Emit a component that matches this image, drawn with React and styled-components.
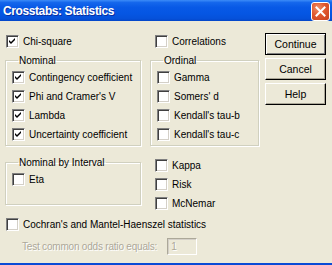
import React from "react";
import styled, { createGlobalStyle } from "styled-components";

const Global = createGlobalStyle`
  html, body { margin: 0; padding: 0; background: #ECE9D8; }
  body { font-family: "Liberation Sans", Arial, sans-serif; }
`;

const Window = styled.div`
  width: 332px;
  height: 265px;
  box-sizing: border-box;
  background: #ECE9D8;
  display: flex;
  flex-direction: column;
  overflow: hidden;
  border-bottom: 2px solid #0A4BD6;
  font-family: "Liberation Sans", Arial, sans-serif;
  font-size: 10px;
  color: #000;
`;

const TitleBar = styled.div`
  height: 21px;
  flex: none;
  display: flex;
  align-items: center;
  justify-content: space-between;
  padding: 0 2px 0 3px;
  background: linear-gradient(
    to bottom,
    #3C8CF8 0%,
    #1567EC 12%,
    #0859E6 35%,
    #0556E3 65%,
    #0551DA 88%,
    #0446C8 100%
  );
`;

const Title = styled.div`
  color: #fff;
  font-weight: bold;
  font-size: 12px;
  letter-spacing: -0.4px;
  text-shadow: 1px 1px 0 #0A2FA0;
`;

const CloseBtn = styled.div`
  width: 19px;
  height: 19px;
  box-sizing: border-box;
  border: 1px solid #fff;
  border-radius: 3px;
  background: radial-gradient(circle at 35% 30%, #F0906A 0%, #E0582E 45%, #C8401E 100%);
  display: flex;
  align-items: center;
  justify-content: center;
  margin-top: 1px;
`;

const Body = styled.div`
  flex: 1;
  display: flex;
  padding: 14px 0 0 5px;
`;

const Main = styled.div`
  width: 254px;
  display: grid;
  grid-template-columns: 145px 109px;
  grid-auto-rows: auto;
  align-content: start;
`;

const Cell = styled.div`
  grid-column: ${(p) => (p.$span ? "1 / -1" : "auto")};
  margin-top: ${(p) => p.$mt || 0}px;
  display: flex;
  flex-direction: column;
  gap: ${(p) => p.$gap || 0}px;
  padding-left: ${(p) => p.$pl || 0}px;
`;

const Group = styled.fieldset`
  margin: 0;
  padding: 4px 0 0 6px;
  height: ${(p) => p.$h}px;
  width: ${(p) => p.$w}px;
  box-sizing: border-box;
  border: 1px solid #D0D0BF;
  box-shadow: inset 1px 1px 0 #fff, 1px 1px 0 #fff;
  display: flex;
  flex-direction: column;
  gap: 6px;
`;

const Legend = styled.legend`
  padding: 0 1px;
  margin-left: 6px;
  line-height: 13px;
  font-size: 10px;
`;

const CheckRow = styled.label`
  display: flex;
  align-items: center;
  height: 13px;
  white-space: nowrap;
  color: #000;
`;

const Box = styled.span`
  width: 13px;
  height: 13px;
  box-sizing: border-box;
  flex: none;
  background: #fff;
  border-top: 1px solid #808080;
  border-left: 1px solid #808080;
  border-right: 1px solid #fff;
  border-bottom: 1px solid #fff;
  box-shadow: inset 1px 1px 0 #404040, inset -1px -1px 0 #D4D0C8;
  display: flex;
  align-items: center;
  justify-content: center;
  margin-right: 4px;
`;

const Check = ({ checked, label }) => (
  <CheckRow>
    <Box>
      {checked && (
        <svg width="7" height="7" viewBox="0 0 7 7">
          <path d="M0 2 L2 4 L6 0 L6 2 L2 6 L0 4 Z" fill="#000" />
        </svg>
      )}
    </Box>
    {label}
  </CheckRow>
);

const Buttons = styled.div`
  margin-left: 6px;
  display: flex;
  flex-direction: column;
  gap: 3px;
  margin-top: -2px;
`;

const Button = styled.div`
  width: 61px;
  height: 22px;
  box-sizing: border-box;
  display: flex;
  align-items: center;
  justify-content: center;
  background: #ECE9D8;
  border-top: 1px solid ${(p) => (p.$default ? "#000" : "#fff")};
  border-left: 1px solid ${(p) => (p.$default ? "#000" : "#fff")};
  border-right: 1px solid #000;
  border-bottom: 1px solid #000;
  box-shadow: ${(p) =>
    p.$default
      ? "inset 1px 1px 0 #fff, inset -1px -1px 0 #808080"
      : "inset -1px -1px 0 #ACA899"};
  font-size: 10.5px;
`;

const OddsRow = styled.div`
  grid-column: 1 / -1;
  display: flex;
  align-items: center;
  margin-top: 7px;
  padding-left: 17px;
  color: #ACA899;
  text-shadow: 1px 1px 0 #fff;
  gap: 10px;
  letter-spacing: -0.2px;
`;

const OddsInput = styled.div`
  width: 30px;
  height: 17px;
  box-sizing: border-box;
  border-top: 1px solid #ACA899;
  border-left: 1px solid #ACA899;
  border-right: 1px solid #fff;
  border-bottom: 1px solid #fff;
  box-shadow: inset 1px 1px 0 #D4D0C8;
  padding: 2px 3px;
  font-size: 10px;
  line-height: 12px;
`;

export default function App() {
  return (
    <>
      <Global />
      <Window>
        <TitleBar>
          <Title>Crosstabs: Statistics</Title>
          <CloseBtn>
            <svg width="11" height="11" viewBox="0 0 11 11">
              <path d="M1.5 1.5 L9.5 9.5 M9.5 1.5 L1.5 9.5" stroke="#fff" strokeWidth="2" strokeLinecap="square" />
            </svg>
          </CloseBtn>
        </TitleBar>
        <Body>
          <Main>
            <Cell $pl={1}>
              <Check checked label="Chi-square" />
            </Cell>
            <Cell $pl={5}>
              <Check label="Correlations" />
            </Cell>
            <Cell $mt={6}>
              <Group $w={136} $h={92}>
                <Legend>Nominal</Legend>
                <Check checked label="Contingency coefficient" />
                <Check checked label="Phi and Cramer's V" />
                <Check checked label="Lambda" />
                <Check checked label="Uncertainty coefficient" />
              </Group>
            </Cell>
            <Cell $mt={6}>
              <Group $w={109} $h={92}>
                <Legend>Ordinal</Legend>
                <Check label="Gamma" />
                <Check label="Somers' d" />
                <Check label="Kendall's tau-b" />
                <Check label="Kendall's tau-c" />
              </Group>
            </Cell>
            <Cell $mt={10}>
              <Group $w={136} $h={49}>
                <Legend>Nominal by Interval</Legend>
                <Check label="Eta" />
              </Group>
            </Cell>
            <Cell $mt={13} $pl={5} $gap={6}>
              <Check label="Kappa" />
              <Check label="Risk" />
              <Check label="McNemar" />
            </Cell>
            <Cell $span $mt={8} $pl={1}>
              <Check label="Cochran's and Mantel-Haenszel statistics" />
            </Cell>
            <OddsRow>
              Test common odds ratio equals:
              <OddsInput>1</OddsInput>
            </OddsRow>
          </Main>
          <Buttons>
            <Button $default>Continue</Button>
            <Button>Cancel</Button>
            <Button>Help</Button>
          </Buttons>
        </Body>
      </Window>
    </>
  );
}
